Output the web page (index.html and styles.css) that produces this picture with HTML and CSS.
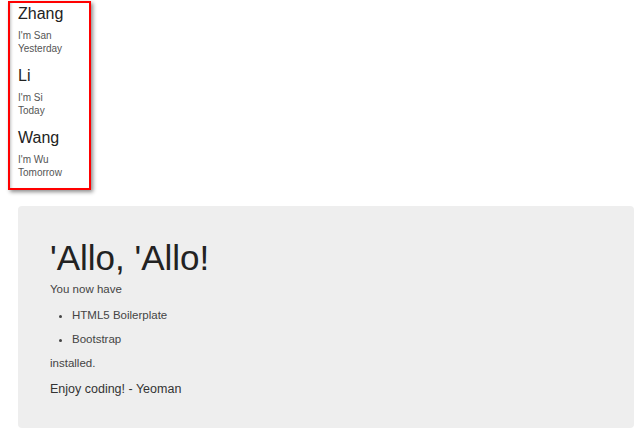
FILE: index.html
```html
<!DOCTYPE html>
<html>
<head>
<meta charset="utf-8">
<link rel="stylesheet" href="styles.css">
</head>
<body>
<div class="people">
  <div class="person">
    <div class="name">Zhang</div>
    <div class="small">I'm San</div>
    <div class="small">Yesterday</div>
  </div>
  <div class="person">
    <div class="name">Li</div>
    <div class="small">I'm Si</div>
    <div class="small">Today</div>
  </div>
  <div class="person">
    <div class="name">Wang</div>
    <div class="small">I'm Wu</div>
    <div class="small">Tomorrow</div>
  </div>
</div>
<div class="jumbotron">
  <h1 class="title">'Allo, 'Allo!</h1>
  <p class="text">You now have</p>
  <ul class="list">
    <li>HTML5 Boilerplate</li>
    <li>Bootstrap</li>
  </ul>
  <p class="text">installed.</p>
  <p class="lead">Enjoy coding! - Yeoman</p>
</div>
</body>
</html>
```
FILE: styles.css
```css
html, body {
  margin: 0;
  padding: 0;
  background: #fff;
  font-family: "Liberation Sans", Arial, sans-serif;
}
.people {
  box-sizing: border-box;
  margin: 1px 0 0 8px;
  width: 83px;
  height: 189px;
  border: 2px solid #f00;
  padding: 1px 0 0 8px;
  box-shadow: 2px 2px 4px rgba(0,0,0,0.45), inset 3px 0 3px -2px rgba(0,0,0,0.25);
}
.person {
  margin-bottom: 11px;
}
.name {
  font-size: 16px;
  line-height: 20px;
  color: #222;
  margin-bottom: 5px;
}
.small {
  font-size: 10px;
  line-height: 13px;
  color: #555;
}
.jumbotron {
  box-sizing: border-box;
  margin: 16px 6px 0 18px;
  height: 222px;
  background: #eee;
  border-radius: 4px;
  padding: 32px 32px 0 32px;
}
.title {
  margin: 0 0 3px 0;
  font-size: 35px;
  line-height: 40px;
  font-weight: normal;
  color: #222;
}
.text {
  margin: 0;
  font-size: 11.5px;
  line-height: 16px;
  color: #444;
}
.list {
  margin: 10px 0 8px 0;
  padding-left: 22px;
  font-size: 11.5px;
  line-height: 16px;
  color: #444;
}
.list li {
  margin-bottom: 8px;
}
.list li:last-child {
  margin-bottom: 0;
}
.lead {
  margin: 9px 0 0 0;
  font-size: 12.5px;
  line-height: 18px;
  color: #333;
}
```
